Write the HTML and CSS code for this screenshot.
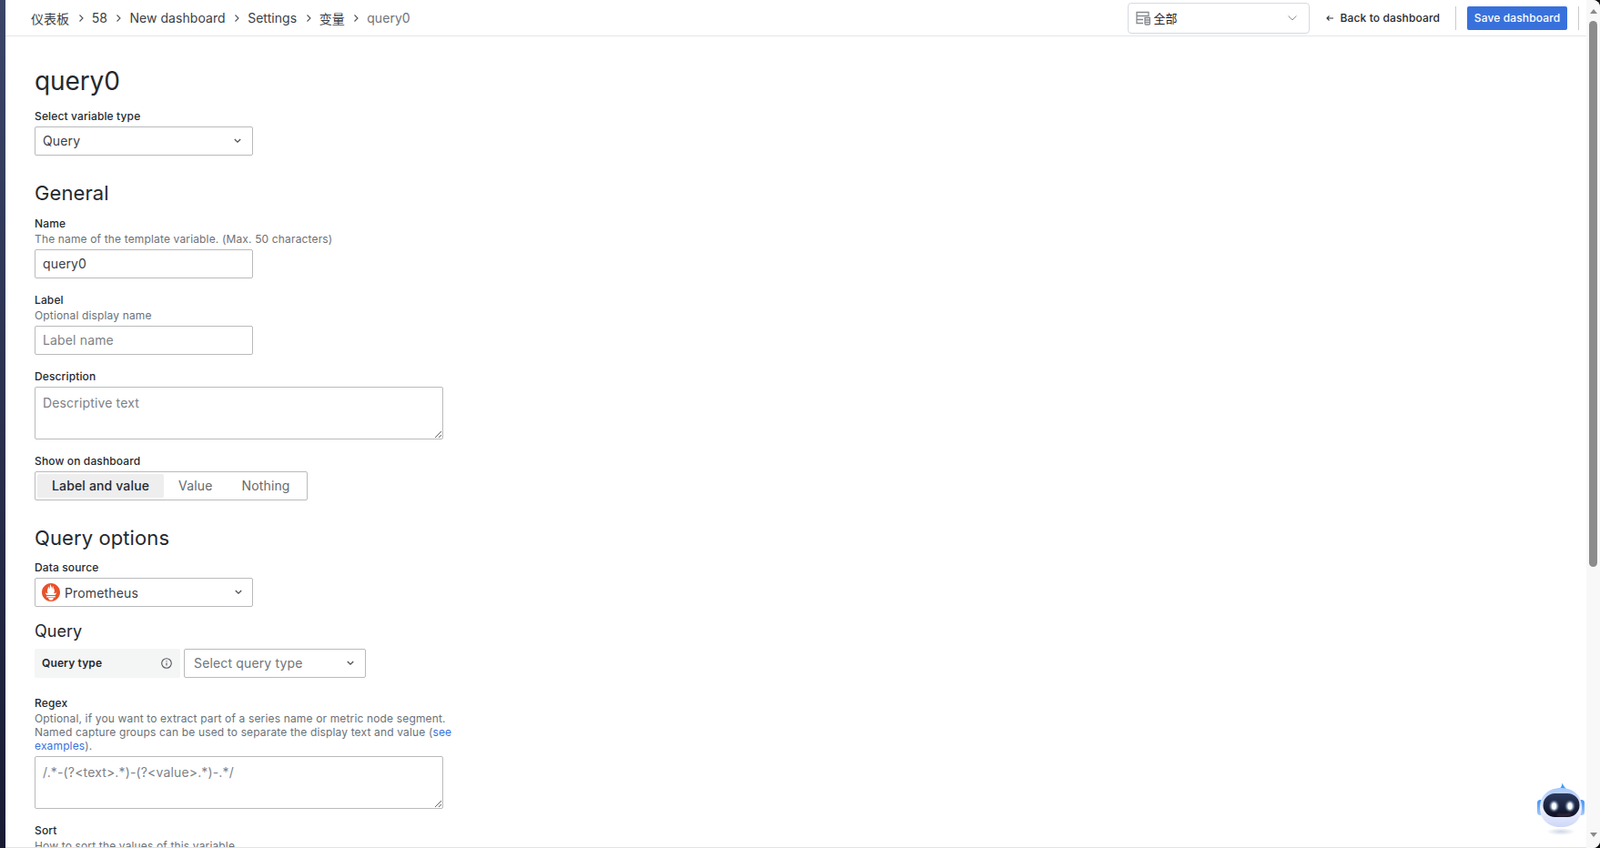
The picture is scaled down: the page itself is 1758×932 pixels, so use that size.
FILE: index.html
```html
<!DOCTYPE html>
<html lang="en">
<head>
<meta charset="utf-8">
<title>query0</title>
<link rel="stylesheet" href="styles.css">
</head>
<body>
<div class="app">
  <div class="rail"></div>
  <div class="page">
    <header class="topbar">
      <nav class="crumbs">
        <a>仪表板</a><svg class="sep" viewBox="0 0 8 10"><path d="M2.5 1.5 6 5 2.5 8.5"/></svg>
        <a>58</a><svg class="sep" viewBox="0 0 8 10"><path d="M2.5 1.5 6 5 2.5 8.5"/></svg>
        <a>New dashboard</a><svg class="sep" viewBox="0 0 8 10"><path d="M2.5 1.5 6 5 2.5 8.5"/></svg>
        <a>Settings</a><svg class="sep" viewBox="0 0 8 10"><path d="M2.5 1.5 6 5 2.5 8.5"/></svg>
        <a>变量</a><svg class="sep" viewBox="0 0 8 10"><path d="M2.5 1.5 6 5 2.5 8.5"/></svg>
        <span class="current">query0</span>
      </nav>
      <div class="actions">
        <div class="scope">
          <svg class="scope-icon" viewBox="0 0 16 16"><path d="M1 1.500h13v4H1zM1 5.500v8h7M1 9.500h7"/><path d="M10 7.500h5.500v6.500a1 1 0 0 1-1 1H11a1 1 0 0 1-1-1zM10 10h5.500M10 12.500h5.500"/></svg>
          <span class="scope-text">全部</span>
          <svg class="scope-chev" viewBox="0 0 12 8"><path d="M1.500 1.500 6 6l4.500-4.500"/></svg>
        </div>
        <button class="back"><svg viewBox="0 0 10 10"><path d="M9 5H2M4.500 2.500 2 5l2.500 2.500"/></svg>Back to dashboard</button>
        <i class="vr"></i>
        <button class="save">Save dashboard</button>
        <i class="vr"></i>
      </div>
    </header>
    <main class="content">
      <h1>query0</h1>
      <div class="field">
        <label>Select variable type</label>
        <div class="select"><span>Query</span><svg class="chev" viewBox="0 0 10 8"><path d="M1.800 2 5 5.200 8.200 2"/></svg></div>
      </div>
      <h2>General</h2>
      <div class="field">
        <label class="with-desc">Name</label>
        <p class="desc">The name of the template variable. (Max. 50 characters)</p>
        <input class="input" value="query0">
      </div>
      <div class="field">
        <label class="with-desc">Label</label>
        <p class="desc">Optional display name</p>
        <input class="input" placeholder="Label name">
      </div>
      <div class="field">
        <label>Description</label>
        <textarea class="area" placeholder="Descriptive text"></textarea>
      </div>
      <div class="field">
        <label>Show on dashboard</label>
        <div class="radio">
          <span class="opt on">Label and value</span><span class="opt">Value</span><span class="opt">Nothing</span>
        </div>
      </div>
      <h2 class="query-options">Query options</h2>
      <div class="field ds-field">
        <label>Data source</label>
        <div class="select ds">
          <svg class="prom" viewBox="0 0 24 24"><path fill="#e6522c" d="M12 0C5.373 0 0 5.372 0 12c0 6.627 5.373 12 12 12s12-5.373 12-12c0-6.628-5.373-12-12-12zm0 22.460c-1.885 0-3.414-1.455-3.414-3.250h6.828c0 1.795-1.529 3.250-3.414 3.250zm5.640-3.745H6.360v-2.046h11.280v2.046zm-.04-3.098H6.391c-.037-.043-.075-.086-.111-.13-1.155-1.401-1.427-2.133-1.691-2.879-.005-.024 1.400.287 2.395.511 0 0 .513.119 1.262.255-.72-.843-1.147-1.915-1.147-3.010 0-2.406 1.845-4.508 1.180-6.207.648.053 1.340 1.367 1.387 3.422.689-.951.977-2.690.977-3.755 0-1.103.727-2.385 1.454-2.429-.648 1.069.168 1.984.894 4.256.272.854.237 2.290.447 3.201.07-1.892.395-4.652 1.595-5.605-.529 1.200.079 2.702.494 3.424.671 1.164 1.078 2.047 1.078 3.716 0 1.119-.413 2.172-1.110 2.995.792-.149 1.340-.283 1.340-.283l2.573-.502s-.374 1.538-1.810 3.019z"/></svg>
          <span>Prometheus</span>
          <svg class="chev" viewBox="0 0 10 8"><path d="M1.800 2 5 5.200 8.200 2"/></svg>
        </div>
      </div>
      <h3>Query</h3>
      <div class="qrow">
        <div class="qlabel"><span>Query type</span><svg viewBox="0 0 14 14"><circle cx="7" cy="7" r="5.300"/><path d="M7 6.400v3.200M7 4.200v1"/></svg></div>
        <div class="qselect"><span>Select query type</span><svg class="chev" viewBox="0 0 10 8"><path d="M1.800 2 5 5.200 8.200 2"/></svg></div>
      </div>
      <div class="field">
        <label class="with-desc">Regex</label>
        <p class="desc">Optional, if you want to extract part of a series name or metric node segment.<br>Named capture groups can be used to separate the display text and value (<a class="link">see<br>examples</a>).</p>
        <textarea class="area" placeholder="/.*-(?<text>.*)-(?<value>.*)-.*/"></textarea>
      </div>
      <div class="field">
        <label class="with-desc">Sort</label>
        <p class="desc">How to sort the values of this variable.</p>
      </div>
    </main>
  </div>
  <div class="scrollbar">
    <span class="arrow up"></span>
    <div class="thumb"></div>
    <span class="arrow down"></span>
  </div>
  <svg class="robot" viewBox="0 0 60 64">
    <defs>
      <linearGradient id="rb" x1="0" y1="0" x2="0" y2="1"><stop offset="0" stop-color="#a9c8fa"/><stop offset=".55" stop-color="#eef1fe"/><stop offset="1" stop-color="#cdd6f8"/></linearGradient>
      <linearGradient id="rf" x1="0" y1="0" x2="0" y2="1"><stop offset="0" stop-color="#2b3a5e"/><stop offset="1" stop-color="#0d0f22"/></linearGradient>
      <linearGradient id="re" x1="0" y1="0" x2="0" y2="1"><stop offset="0" stop-color="#3f93f5"/><stop offset="1" stop-color="#a8c8fb"/></linearGradient>
      <radialGradient id="rs"><stop offset="0" stop-color="#b9c4dc" stop-opacity=".7"/><stop offset="1" stop-color="#b9c4dc" stop-opacity="0"/></radialGradient>
      <filter id="rg" x="-80%" y="-80%" width="260%" height="260%"><feGaussianBlur stdDeviation="0.900"/></filter>
    </defs>
    <ellipse cx="30" cy="57" rx="16" ry="4" fill="url(#rs)"/>
    <path d="M25 11c3 0 6-2 6.500-7.500C33 7 35 9.500 37 11z" fill="#3f9bf3"/>
    <rect x="4" y="22" width="7" height="17" rx="3.500" fill="url(#re)"/>
    <rect x="49" y="22" width="7" height="17" rx="3.500" fill="url(#re)"/>
    <path d="M30 9c14 0 23 9 23 21 0 14-9 22-23 22S7 44 7 30C7 18 16 9 30 9z" fill="url(#rb)"/>
    <rect x="10.500" y="15" width="40" height="26" rx="13" fill="url(#rf)"/>
    <path d="M26 38.500c6 1 11 .5 15-1" stroke="#7a4a55" stroke-width="1" fill="none" filter="url(#rg)"/>
    <ellipse cx="22.500" cy="29" rx="4" ry="5" fill="#cfe6ff" filter="url(#rg)"/>
    <ellipse cx="40" cy="29" rx="4" ry="5" fill="#cfe6ff" filter="url(#rg)"/>
    <ellipse cx="22.500" cy="29" rx="2.300" ry="3.500" fill="#fff"/>
    <ellipse cx="40" cy="29" rx="2.300" ry="3.500" fill="#fff"/>
  </svg>
</div>
</body>
</html>
```
FILE: styles.css
```css
* { box-sizing: border-box; }
html, body { margin: 0; height: 100%; overflow: hidden; background: #111; }
body { font-family: Inter, "Noto Sans CJK SC", sans-serif; color: #24292e; }
.app { position: relative; display: flex; height: 932px; overflow: hidden; background: #fff; border-radius: 0 8px 8px 0; }
.rail { width: 6px; flex: none; background: linear-gradient(#3b4569, #191b33); }
.page { flex: 1; min-width: 0; display: flex; flex-direction: column; border-bottom: 1px solid #e2e3e6; }

.topbar { flex: none; height: 40px; display: flex; align-items: center; justify-content: space-between; border-bottom: 1px solid #e4e6ea; padding-left: 28px; }
.crumbs { display: flex; align-items: center; font-size: 14px; letter-spacing: .05px; color: #3b4046; }
.sep { width: 8px; height: 10px; margin: 0 8px 0 8.500px; }
.sep path { fill: none; stroke: #4c5157; stroke-width: 1.100; }
.current { color: #6f7479; }
.actions { display: flex; align-items: center; margin-right: 8px; }
.scope { width: 200px; height: 34px; border: 1px solid #d5d9e2; border-radius: 4px; display: flex; align-items: center; padding: 0 12px 0 8px; font-size: 13px; color: #1d2129; }
.scope-icon { width: 16px; height: 16px; flex: none; }
.scope-icon path { fill: none; stroke: #85898f; stroke-width: 1.300; }
.scope-text { margin-left: 4px; flex: 1; }
.scope-chev { width: 12px; height: 8px; }
.scope-chev path { fill: none; stroke: #8f959e; stroke-width: 1; }
.back { display: flex; align-items: center; height: 26px; border: 0; background: none; font: 500 12px Inter, sans-serif; letter-spacing: .13px; color: #24292e; padding: 0; margin: 0 17px 0 17px; }
.back svg { width: 10px; height: 10px; margin-right: 7px; }
.back path { fill: none; stroke: #33383d; stroke-width: 1.100; }
.vr { width: 1px; height: 26px; background: #c9cbcf; }
.save { height: 26px; width: 110px; border: 0; border-radius: 2px; background: #3871dc; color: #fff; font: 500 12px Inter, sans-serif; letter-spacing: .13px; margin: 0 12px; padding: 0; }

.content { flex: 1; min-height: 0; overflow: hidden; padding: 24px 0 0 32px; }
h1 { margin: 0 0 6px; font-size: 28px; font-weight: 400; line-height: 50px; height: 50px; letter-spacing: -.1px; }
h2 { margin: 28px 0 13px; font-size: 22px; font-weight: 400; line-height: 26px; height: 26px; letter-spacing: .1px; }
h3 { margin: 14px 0 6px; font-size: 18px; font-weight: 400; line-height: 26px; height: 26px; }
.field { margin-bottom: 16px; }
.ds-field { margin-bottom: 0; }
label { display: block; font-size: 12px; font-weight: 500; line-height: 15px; letter-spacing: .13px; margin-bottom: 4px; color: #24292e; }
label.with-desc { margin-bottom: 2px; }
.desc { margin: 0 0 4px; font-size: 12px; line-height: 15px; letter-spacing: .15px; color: #6c7177; }
.link { color: #3871dc; }
.select, .input { display: flex; align-items: center; width: 240px; height: 32px; border: 1px solid #b9babc; border-radius: 2px; background: #fff; padding: 0 8px 1px; font: 14px Inter, sans-serif; letter-spacing: .15px; color: #3b4046; }
.select span { flex: 1; }
.chev { width: 10px; height: 8px; flex: none; margin-right: 3px; }
.chev path { fill: none; stroke: #4b5056; stroke-width: 1.300; }
.input::placeholder, .area::placeholder { color: #7d8186; opacity: 1; }
.area { display: block; width: 449px; height: 58px; border: 1px solid #b9babc; border-radius: 2px; padding: 8px; margin: 0; font: 14px/18px Inter, sans-serif; letter-spacing: .15px; color: #3b4046; outline: 0; }
.radio { display: flex; width: 300px; height: 32px; border: 1px solid #b9babc; border-radius: 2px; padding: 2px; font-size: 14px; letter-spacing: .15px; color: #65696e; }
.opt { display: flex; align-items: center; padding: 0 16px 1px; }
.opt.on { background: #eeeeef; border-radius: 2px; color: #24292e; font-weight: 500; }
.query-options { margin-bottom: 12px; }
.ds { padding: 0 8px 0 7px; gap: 5px; }
.ds .chev { margin-right: 2px; }
.prom { width: 20px; height: 20px; flex: none; }
.qrow { display: flex; gap: 4px; margin-bottom: 20px; }
.qlabel { width: 160px; height: 32px; display: flex; align-items: center; justify-content: space-between; padding: 0 8px 1px 8px; background: #f4f5f5; border-radius: 2px; font-size: 12px; font-weight: 600; letter-spacing: .13px; }
.qlabel svg { width: 14px; height: 14px; }
.qlabel circle, .qlabel path { fill: none; stroke: #53585d; stroke-width: 1.100; }
.qselect { width: 200px; height: 32px; display: flex; align-items: center; justify-content: space-between; border: 1px solid #b9babc; border-radius: 2px; padding: 0 9px 1px 10px; font-size: 14px; letter-spacing: .15px; color: #6f7479; }
.qselect .chev { margin-right: 2px; }

.scrollbar { position: relative; width: 15px; flex: none; background: #f8f8f8; }
.thumb { position: absolute; top: 23px; right: 3px; width: 9px; height: 600px; background: #8c8c8c; border-radius: 4.5px; }
.arrow { position: absolute; right: 3px; width: 0; height: 0; border-left: 4.5px solid transparent; border-right: 4.5px solid transparent; }
.arrow.up { top: 10px; border-bottom: 5px solid #8a8a8a; }
.arrow.down { bottom: 12px; border-top: 5px solid #8a8a8a; }
.robot { position: absolute; left: 1685px; top: 857px; width: 60px; height: 64px; }
```
